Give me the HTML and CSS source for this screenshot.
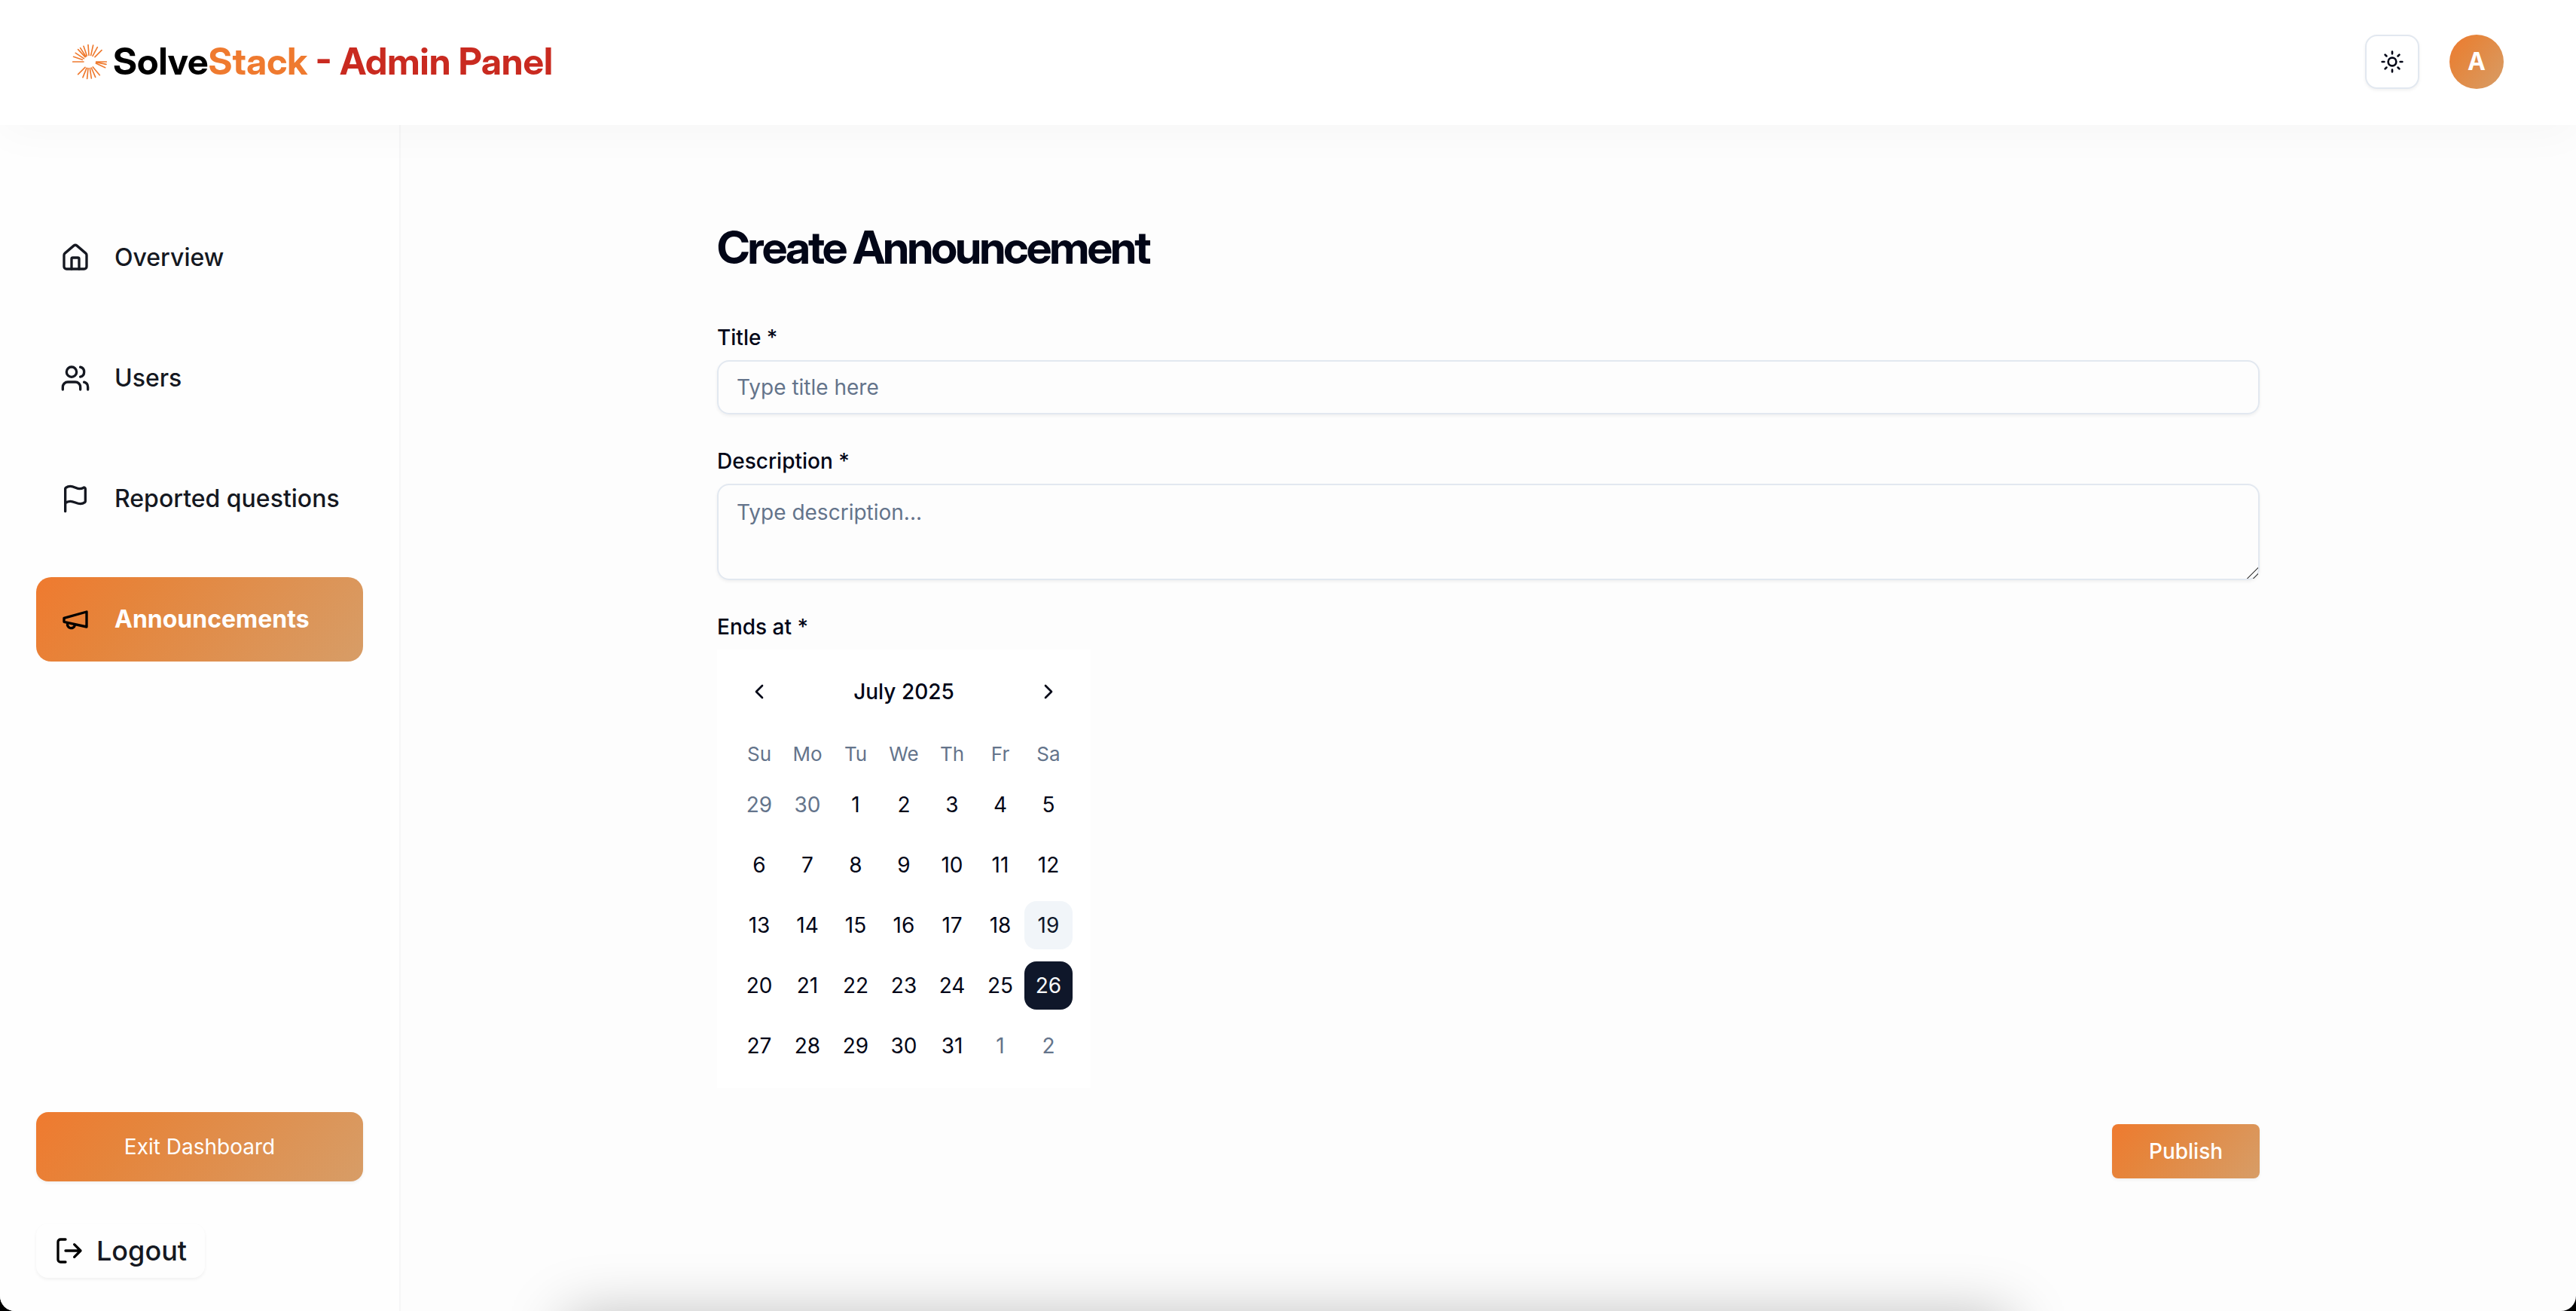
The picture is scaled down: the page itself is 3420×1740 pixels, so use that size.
FILE: index.html
```html
<!DOCTYPE html>
<html lang="en">
<head>
<meta charset="utf-8">
<title>SolveStack - Admin Panel</title>
<link rel="stylesheet" href="styles.css">
</head>
<body>
<div class="window">
<header class="topbar">
  <a class="brand" href="#">
    <svg class="brand-mark" viewBox="48 24 138 144" aria-hidden="true">
      <path d="M50 96H93M53 76L88 88M61 61L94 83M71 47L99 77M80 41L102 75M93 34L106 72M111 29L114 70M131 30L122 70M148 38L129 73M165 50L138 77M143 96H184M143 98L183 106M142 102L179 119M157 149L130 117M140 157L124 120M124 162L118 122M107 163L111 122M90 158L105 121M71 146L99 118"/>
    </svg>
    <span class="brand-name"><span class="solve">Solve</span><span class="stack">Stack</span><span class="panel"> - Admin Panel</span></span>
  </a>
  <div class="topbar-actions">
    <button class="theme-toggle" type="button" aria-label="Toggle theme">
      <svg class="icon icon-sm" viewBox="0 0 24 24" aria-hidden="true"><circle cx="12" cy="12" r="4"/><path d="M12 2v2M12 20v2m-7.07-17.07 1.41 1.41m11.32 11.32 1.41 1.41M2 12h2m16 0h2M6.34 17.66l-1.41 1.41M19.07 4.93l-1.41 1.41"/></svg>
    </button>
    <button class="avatar" type="button">A</button>
  </div>
</header>
<div class="shell">
  <aside class="sidebar">
    <nav class="menu">
      <a class="menu-item" href="#"><svg class="icon" viewBox="0 0 24 24" aria-hidden="true"><path d="M15 21v-8a1 1 0 0 0-1-1h-4a1 1 0 0 0-1 1v8"/><path d="M3 10a2 2 0 0 1 .709-1.528l7-5.999a2 2 0 0 1 2.582 0l7 5.999A2 2 0 0 1 21 10v9a2 2 0 0 1-2 2H5a2 2 0 0 1-2-2z"/></svg>Overview</a>
      <a class="menu-item" href="#"><svg class="icon" viewBox="0 0 24 24" aria-hidden="true"><path d="M16 21v-2a4 4 0 0 0-4-4H6a4 4 0 0 0-4 4v2"/><circle cx="9" cy="7" r="4"/><path d="M22 21v-2a4 4 0 0 0-3-3.87M16 3.13a4 4 0 0 1 0 7.75"/></svg>Users</a>
      <a class="menu-item" href="#"><svg class="icon" viewBox="0 0 24 24" aria-hidden="true"><path d="M4 22V4a1 1 0 0 1 .4-.8A6 6 0 0 1 8 2c3 0 5 2 7.333 2q2 0 3.067-.8A1 1 0 0 1 20 4v10a1 1 0 0 1-.4.8A6 6 0 0 1 16 16c-3 0-5-2-8-2a6 6 0 0 0-4 1.528"/></svg>Reported questions</a>
      <a class="menu-item active" href="#" aria-current="page"><svg class="icon" viewBox="0 0 24 24" aria-hidden="true"><path d="m3 11 18-5v12L3 14v-3z"/><path d="M11.6 16.8a3 3 0 1 1-5.8-1.6"/></svg>Announcements</a>
    </nav>
    <div class="sidebar-foot">
      <button class="exit" type="button">Exit Dashboard</button>
      <button class="logout" type="button"><svg class="icon" viewBox="0 0 24 24" aria-hidden="true"><path d="m16 17 5-5-5-5M21 12H9M9 21H5a2 2 0 0 1-2-2V5a2 2 0 0 1 2-2h4"/></svg>Logout</button>
    </div>
  </aside>
  <main class="content">
    <form class="form">
      <h1 class="title">Create Announcement</h1>
      <div class="field">
        <label for="title">Title *</label>
        <input class="control" id="title" type="text" placeholder="Type title here">
      </div>
      <div class="field">
        <label for="description">Description *</label>
        <textarea class="control area" id="description" placeholder="Type description..."></textarea>
      </div>
      <div class="field">
        <span class="label" id="ends">Ends at *</span>
        <div class="calendar" role="group" aria-labelledby="ends">
          <div class="calendar-head">
            <button class="step" type="button" aria-label="Previous month"><svg class="icon icon-sm" viewBox="0 0 24 24" aria-hidden="true"><path d="m15 18-6-6 6-6"/></svg></button>
            <span class="label">July 2025</span>
            <button class="step" type="button" aria-label="Next month"><svg class="icon icon-sm" viewBox="0 0 24 24" aria-hidden="true"><path d="m9 18 6-6-6-6"/></svg></button>
          </div>
          <table class="days">
            <thead><tr><th>Su</th><th>Mo</th><th>Tu</th><th>We</th><th>Th</th><th>Fr</th><th>Sa</th></tr></thead>
            <tbody>
              <tr><td><button class="day outside" type="button">29</button></td><td><button class="day outside" type="button">30</button></td><td><button class="day" type="button">1</button></td><td><button class="day" type="button">2</button></td><td><button class="day" type="button">3</button></td><td><button class="day" type="button">4</button></td><td><button class="day" type="button">5</button></td></tr>
              <tr><td><button class="day" type="button">6</button></td><td><button class="day" type="button">7</button></td><td><button class="day" type="button">8</button></td><td><button class="day" type="button">9</button></td><td><button class="day" type="button">10</button></td><td><button class="day" type="button">11</button></td><td><button class="day" type="button">12</button></td></tr>
              <tr><td><button class="day" type="button">13</button></td><td><button class="day" type="button">14</button></td><td><button class="day" type="button">15</button></td><td><button class="day" type="button">16</button></td><td><button class="day" type="button">17</button></td><td><button class="day" type="button">18</button></td><td><button class="day today" type="button">19</button></td></tr>
              <tr><td><button class="day" type="button">20</button></td><td><button class="day" type="button">21</button></td><td><button class="day" type="button">22</button></td><td><button class="day" type="button">23</button></td><td><button class="day" type="button">24</button></td><td><button class="day" type="button">25</button></td><td><button class="day selected" type="button" aria-pressed="true">26</button></td></tr>
              <tr><td><button class="day" type="button">27</button></td><td><button class="day" type="button">28</button></td><td><button class="day" type="button">29</button></td><td><button class="day" type="button">30</button></td><td><button class="day" type="button">31</button></td><td><button class="day outside" type="button">1</button></td><td><button class="day outside" type="button">2</button></td></tr>
            </tbody>
          </table>
        </div>
      </div>
      <button class="publish" type="submit">Publish</button>
    </form>
  </main>
</div>
</div>
</body>
</html>
```
FILE: styles.css
```css
:root {
  --accent: linear-gradient(129deg, #ef7a2f 0%, #e5853c 30%, #d79d67 100%);
  --ink: #020617;
  --muted: #64748b;
  --line: #e2e8f0;
  --shadow-sm: 0 2px 4px rgba(0, 0, 0, 0.06);
}
* { box-sizing: border-box; }
html { background: #000; }
body {
  margin: 0;
  font-family: Inter, "Liberation Sans", sans-serif;
  font-size: 28px;
  line-height: 40px;
  color: var(--ink);
}
button, input, textarea { font: inherit; color: inherit; }
button { border: 0; padding: 0; background: none; cursor: pointer; }
a { color: inherit; text-decoration: none; }

.window {
  position: relative;
  display: flex;
  flex-direction: column;
  min-height: 100vh;
  overflow: hidden;
  background: #fdfdfd;
  border-radius: 0 0 20px 20px;
}
/* soft shade rising from the bottom edge */
.window::after {
  content: "";
  position: absolute;
  top: 100%;
  left: 22%;
  right: 22%;
  height: 200px;
  box-shadow: 0 8px 80px rgba(0, 0, 0, 0.28);
  pointer-events: none;
}

.icon {
  width: 40px;
  height: 40px;
  flex: none;
  fill: none;
  stroke: currentColor;
  stroke-width: 2;
  stroke-linecap: round;
  stroke-linejoin: round;
}
.icon-sm { width: 32px; height: 32px; }

.topbar {
  position: relative;
  z-index: 1;
  display: flex;
  align-items: center;
  justify-content: space-between;
  padding: 46px 96px 48px;
  background: #fff;
  box-shadow: 0 10px 60px rgba(0, 0, 0, 0.03);
}
.brand { display: flex; align-items: center; gap: 8px; }
.brand-mark {
  width: 46px;
  height: 48px;
  fill: none;
  stroke: #ef7a2f;
  stroke-width: 5;
  stroke-linecap: round;
}
.brand-name {
  font-family: "Inter Display", Inter, "Liberation Sans", sans-serif;
  font-size: 49px;
  line-height: 60px;
  font-weight: 700;
  color: #000;
  white-space: pre;
}
.stack { color: #ef7a2f; }
.panel { color: #c92a20; }
.topbar-actions { display: flex; gap: 40px; }
.theme-toggle, .avatar {
  display: grid;
  place-items: center;
  width: 72px;
  height: 72px;
}
.theme-toggle {
  background: #fff;
  border: 2px solid var(--line);
  border-radius: 16px;
  box-shadow: var(--shadow-sm);
}
.avatar { border-radius: 50%; background: var(--accent); color: #fff; font-size: 32px; font-weight: 700; }

.shell { flex: 1; display: flex; }
.sidebar {
  display: flex;
  flex-direction: column;
  justify-content: space-between;
  flex: none;
  width: 532px;
  padding: 120px 48px 44px;
  background: #fefefe;
  border-right: 2px solid #f6f6f7;
}
.menu { display: flex; flex-direction: column; gap: 48px; }
.menu-item {
  display: flex;
  align-items: center;
  gap: 32px;
  padding: 36px 32px;
  border-radius: 20px;
  font-size: 32px;
  font-weight: 500;
  white-space: nowrap;
  color: #151821;
}
.menu-item.active { background: var(--accent); color: #fff; font-weight: 700; }
.menu-item.active .icon { color: #000; }
.sidebar-foot { display: flex; flex-direction: column; align-items: flex-start; gap: 56px; }
.exit {
  width: 100%;
  padding: 26px;
  border-radius: 16px;
  background: var(--accent);
  color: #fff;
  box-shadow: var(--shadow-sm);
}
.logout {
  display: flex;
  align-items: center;
  gap: 16px;
  padding: 16px 24px;
  border-radius: 16px;
  font-size: 36px;
  font-weight: 500;
  color: #151821;
  box-shadow: var(--shadow-sm);
}
.logout .icon { color: #000; }

.content { flex: 1; padding: 126px 96px 96px; }
.form {
  display: flex;
  flex-direction: column;
  gap: 48px;
  max-width: 2048px;
  margin: 0 auto;
}
.title {
  margin: 0 0 22px;
  font-family: "Inter Display", Inter, "Liberation Sans", sans-serif;
  font-size: 60px;
  line-height: 72px;
  font-weight: 700;
  letter-spacing: -3px;
}
.field { display: flex; flex-direction: column; align-items: flex-start; gap: 16px; }
label, .label { font-weight: 500; line-height: 28px; }
.control {
  display: block;
  width: 100%;
  height: 72px;
  padding: 14px 24px;
  background: transparent;
  border: 2px solid var(--line);
  border-radius: 16px;
  box-shadow: var(--shadow-sm);
}
.control::placeholder { color: var(--muted); opacity: 1; }
.area { height: 128px; padding-top: 16px; resize: vertical; }
.area::-webkit-resizer {
  background: linear-gradient(135deg, transparent 47%, #666 47%, #666 54%, transparent 54%, transparent 75%, #666 75%, #666 82%, transparent 82%);
}

.calendar { padding: 24px; background: #fff; }
.calendar-head { display: flex; align-items: center; justify-content: space-between; }
.step { display: grid; place-items: center; width: 64px; height: 64px; }
.days { margin-top: 32px; border-collapse: collapse; text-align: center; }
.days th { width: 64px; padding: 0; font-size: 26px; line-height: 38px; font-weight: 400; color: var(--muted); }
.days td { padding: 16px 0 0; }
.day { display: block; width: 64px; height: 64px; border-radius: 16px; }
.day.outside { color: var(--muted); }
.day.today { background: #f1f5f9; color: #0f172a; }
.day.selected { background: #0f172a; color: #f8fafc; }

.publish {
  align-self: flex-end;
  min-width: 196px;
  padding: 16px 48px;
  border-radius: 8px;
  background: var(--accent);
  color: #fff;
  font-weight: 500;
  box-shadow: var(--shadow-sm);
}
```
